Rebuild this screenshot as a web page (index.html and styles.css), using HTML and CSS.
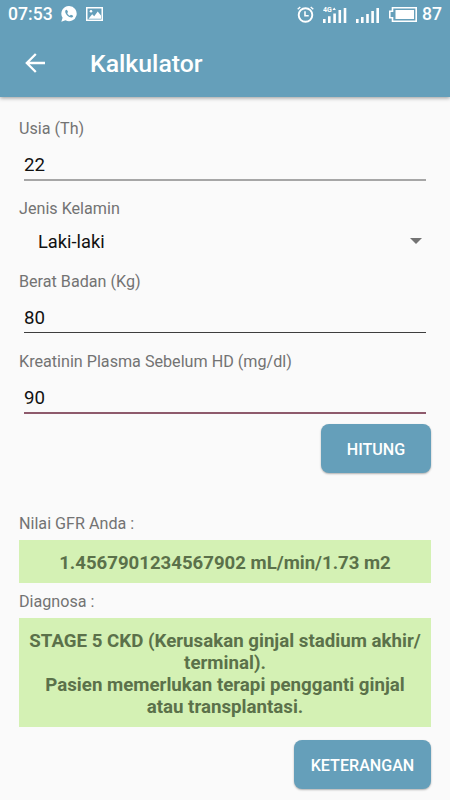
FILE: index.html
```html
<!DOCTYPE html>
<html lang="id">
<head>
    <meta charset="UTF-8">
    <meta name="viewport" content="width=device-width, initial-scale=1.0">
    <title>Kalkulator</title>
    <link rel="stylesheet" href="styles.css">
</head>
<body>
    <header class="header">
        <div class="statusbar">
            <span class="time">07:53</span>
            <svg class="icon-wa" width="18" height="18" viewBox="0 0 18 18">
                <path fill="#fff" d="M9.2 1a7.6 7.6 0 1 1-3.7 14.3L1.3 16.7l1.3-4A7.6 7.6 0 0 1 9.2 1z"/>
                <path fill="#659fba" d="M6.4 4.8c-.5 0-1.2.8-1.2 1.8 0 2.6 3.4 6 6.1 6 1 0 1.9-.8 1.9-1.6 0-.4-1.9-1.4-2.3-1.3-.4.1-.8 1-1.1 1-.8-.2-2.3-1.6-2.5-2.5 0-.3.7-.7.7-1.1 0-.4-.9-2.3-1.6-2.3z"/>
            </svg>
            <svg class="icon-image" width="17" height="14" viewBox="0 0 17 14">
                <path fill="#fff" fill-rule="evenodd" d="M0 0h17v14H0zM1.5 1.5v11h14v-11z"/>
                <path fill="#fff" d="M2.5 11.7L6.2 7.3l2 2L11.7 4.5l3.3 4v3.2z"/>
                <circle fill="#fff" cx="5" cy="4.3" r="1.3"/>
            </svg>
            <div class="status-right">
                <svg width="17" height="17" viewBox="0 0 17 17" fill="none" stroke="#fff">
                    <circle cx="8.5" cy="9" r="6.8" stroke-width="1.9"/>
                    <path stroke-width="1.6" d="M8 5.3v4.4h3.7"/>
                    <path stroke-width="1.4" d="M.7 3.2L3.3.9M16.3 3.2L13.7.9"/>
                </svg>
                <svg class="signal" width="24" height="17" viewBox="0 0 24 17">
                    <text class="net" x="0" y="6">4G</text>
                    <path fill="#fff" d="M0 13h2.6v4H0zM5 10.2h2.6V17H5zM10.3 7.5h2.6V17h-2.6zM15.5 4h2.6v13h-2.6zM20.7 2h2.6v15h-2.6zM9.5 4l1.7-2.5L12.9 4z"/>
                </svg>
                <svg class="signal" width="24" height="17" viewBox="0 0 24 17">
                    <path fill="#fff" d="M0 13h2.6v4H0zM5 11h2.6v6H5zM10.2 8h2.6v9h-2.6zM15.3 5h2.6v12h-2.6zM20.4 2h2.6v15h-2.6z"/>
                </svg>
                <svg class="battery" width="28" height="15" viewBox="0 0 28 15">
                    <path fill="none" stroke="#fff" stroke-width="1.6" d="M3.5.8h23.7v13.4H3.5v-3.5H.8V4.3h2.7z"/>
                    <path fill="#fff" d="M6.5 3h18.5v9H6.5z"/>
                </svg>
                <span class="percent">87</span>
            </div>
        </div>
        <div class="toolbar">
            <svg width="20" height="20" viewBox="0 0 20 20" fill="none" stroke="#fff" stroke-width="2.3">
                <path d="M20 10H2M10.8 1L1.8 10l9 9"/>
            </svg>
            <h1 class="title">Kalkulator</h1>
        </div>
    </header>

    <main class="content">
        <label class="label" for="usia">Usia (Th)</label>
        <input class="input thick" type="text" id="usia" value="22">

        <label class="label" for="kelamin">Jenis Kelamin</label>
        <div class="spinner">
            <select class="select" id="kelamin">
                <option>Laki-laki</option>
                <option>Perempuan</option>
            </select>
            <svg width="12" height="6" viewBox="0 0 12 6">
                <path fill="#737373" d="M0 0h12L6 6z"/>
            </svg>
        </div>

        <label class="label" for="berat">Berat Badan (Kg)</label>
        <input class="input" type="text" id="berat" value="80">

        <label class="label" for="kreatinin">Kreatinin Plasma Sebelum HD (mg/dl)</label>
        <input class="input active" type="text" id="kreatinin" value="90">

        <button class="button">HITUNG</button>

        <div class="label label-gfr">Nilai GFR Anda :</div>
        <div class="result gfr">1.4567901234567902 mL/min/1.73 m2</div>
        <div class="label label-diagnosa">Diagnosa :</div>
        <div class="result">STAGE 5 CKD (Kerusakan ginjal stadium akhir/<br>terminal).<br>Pasien memerlukan terapi pengganti ginjal<br>atau transplantasi.</div>

        <button class="button wide">KETERANGAN</button>
    </main>
</body>
</html>
```
FILE: styles.css
```css
* {
    box-sizing: border-box;
}

body {
    margin: 0;
    height: 800px;
    overflow: hidden;
    font-family: Roboto, sans-serif;
    background-color: #fafafa;
}

svg {
    display: block;
    flex-shrink: 0;
}

.header {
    height: 97px;
    background: #659fba;
    color: #fff;
    box-shadow: 0 1px 4px rgba(0, 0, 0, 0.4);
}

.statusbar {
    display: flex;
    align-items: center;
    height: 28px;
    padding: 0 8px;
    font-size: 17.6px;
    font-weight: 500;
}

.time {
    width: 45px;
}

.icon-wa {
    margin-left: 7px;
}

.icon-image {
    margin-left: 8px;
}

.status-right {
    display: flex;
    align-items: center;
    margin-left: auto;
}

.signal,
.battery {
    margin-left: 9px;
}

.net {
    font-size: 7px;
    font-weight: 700;
    fill: #fff;
}

.percent {
    margin-left: 5px;
}

.toolbar {
    display: flex;
    align-items: center;
    height: 69px;
    padding-left: 25px;
}

.title {
    margin: 2px 0 0 45px;
    font-size: 24.8px;
    font-weight: 500;
}

.content {
    display: flex;
    flex-direction: column;
    padding: 21px 19px 0;
}

.label {
    height: 20px;
    padding-top: 1px;
    line-height: 20px;
    font-size: 16.15px;
    color: #737373;
}

.input {
    height: 42px;
    margin: 0 5px 18px;
    padding: 12px 0 0;
    border: none;
    border-bottom: 1px solid #3d3d3d;
    background: none;
    font-family: inherit;
    font-size: 18.7px;
    color: #111;
    outline: none;
}

.input.thick {
    height: 43px;
    margin-bottom: 17px;
    border-bottom: 2px solid #a6a6a6;
}

.input.active {
    height: 43px;
    margin-bottom: 10px;
    padding-top: 13px;
    border-bottom: 2px solid #8e5a6c;
}

.spinner {
    display: flex;
    align-items: center;
    height: 46px;
    margin-bottom: 7px;
    padding: 0 9px 0 19px;
}

.select {
    flex: 1;
    padding: 1px 0 0;
    border: none;
    appearance: none;
    background: none;
    font-family: inherit;
    font-size: 18.3px;
    line-height: 24px;
    color: #111;
}

.button {
    align-self: flex-end;
    width: 110px;
    height: 49px;
    padding: 2px 0 0;
    border: none;
    border-radius: 8px;
    background: #659fba;
    box-shadow: 0 1px 2px rgba(0, 0, 0, 0.3);
    font-family: inherit;
    font-size: 16.1px;
    font-weight: 500;
    color: #fff;
}

.button.wide {
    width: 137px;
    margin-top: 13px;
}

.label-gfr {
    margin: 40px 0 7px;
}

.label-diagnosa {
    margin: 8px 0 7px;
}

.result {
    padding: 12px 0 9px;
    background: #d4f1b4;
    font-size: 18.7px;
    font-weight: 700;
    line-height: 22px;
    text-align: center;
    white-space: nowrap;
    color: #5b714a;
}

.result.gfr {
    font-size: 18.6px;
}
```
